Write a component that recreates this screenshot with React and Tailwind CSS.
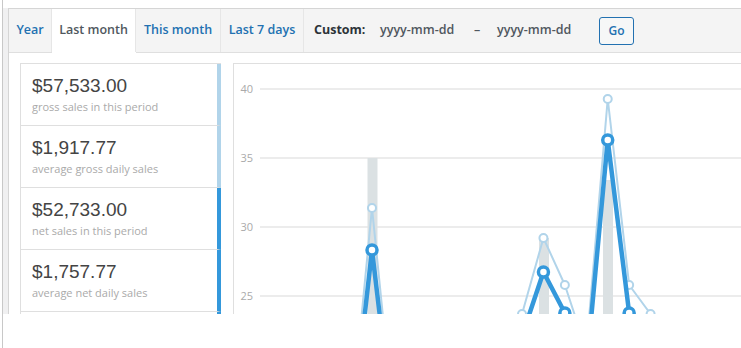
import React from "react";

const X0 = 372;
const STEP = 21.43;
const light = [
  [-1, 430], [0, 208], [1, 420], [2, 430], [3, 440], [4, 430], [5, 420], [6, 380],
  [7, 314], [8, 238], [9, 285], [10, 350], [11, 99], [12, 285], [13, 314], [14, 360], [15, 380], [16, 400], [17, 420],
];
const dark = [
  [-1, 440], [0, 250], [1, 430], [2, 440], [3, 450], [4, 440], [5, 430], [6, 400],
  [7, 336], [8, 272], [9, 313], [10, 370], [11, 140], [12, 313], [13, 345], [14, 380], [15, 400], [16, 420], [17, 440],
];
const px = (k) => X0 + STEP * k;
const pts = (arr) => arr.map(([k, y]) => `${px(k)},${y}`).join(" ");

function Chart() {
  return (
    <svg width="507" height="260" className="block">
      <g transform="translate(-234,-64)">
        {[
          [89, "40"],
          [158, "35"],
          [227, "30"],
          [296, "25"],
        ].map(([y, t]) => (
          <g key={t}>
            <line x1="260" x2="760" y1={y} y2={y} stroke="#e6e6e6" strokeWidth="1.5" />
            <text x="253" y={y + 4} textAnchor="end" fontSize="11" fill="#aaaaaa" fontFamily="'Open Sans', sans-serif">
              {t}
            </text>
          </g>
        ))}
        <rect x="367.5" y="158" width="10" height="200" fill="#dbe1e3" />
        <rect x="539" y="238" width="10" height="120" fill="#dbe1e3" />
        <rect x="603" y="180" width="10" height="180" fill="#dbe1e3" />
        <polyline points={pts(light)} fill="none" stroke="#b1d4ea" strokeWidth="2" strokeLinejoin="round" />
        {light.map(([k, y]) => (
          <circle key={"l" + k} cx={px(k)} cy={y} r="4" fill="#fff" stroke="#b1d4ea" strokeWidth="2" />
        ))}
        <polyline points={pts(dark)} fill="none" stroke="#3498db" strokeWidth="4.5" strokeLinejoin="round" />
        {dark.map(([k, y]) => (
          <circle key={"d" + k} cx={px(k)} cy={y} r="5" fill="#fff" stroke="#3498db" strokeWidth="3.5" />
        ))}
      </g>
    </svg>
  );
}

const items = [
  ["$57,533.00", "gross sales in this period", "border-r-[#b1d4ea]"],
  ["$1,917.77", "average gross daily sales", "border-r-[#b1d4ea]"],
  ["$52,733.00", "net sales in this period", "border-r-[#3498db]"],
  ["$1,757.77", "average net daily sales", "border-r-[#3498db]"],
];

export default function App() {
  return (
    <div className="w-[741px] h-[348px] bg-white overflow-hidden pl-[2px] font-['Open_Sans',sans-serif]">
      <div className="h-full border-l border-[#c8c8c8] flex flex-col">
        <div className="h-[8px] shrink-0 bg-white" />
        <div className="h-[306px] shrink-0 bg-[#f0f0f1] pl-[5px] overflow-hidden">
          <div className="h-full bg-white border-t border-l border-[#d5d5d5] flex flex-col">
            <div className="h-[44px] shrink-0 bg-[#f4f4f4] border-b border-[#dfdfdf] flex items-stretch text-[12.5px] font-semibold">
              <div className="w-[43px] flex items-center justify-center text-[#2271b1] border-r border-[#e6e6e6]">Year</div>
              <div className="w-[84px] flex items-center justify-center text-[#50575e] bg-white shadow-[0_1px_0_0_#fff] border-r border-[#e6e6e6]">
                Last month
              </div>
              <div className="w-[85px] flex items-center justify-center text-[#2271b1] border-r border-[#e6e6e6]">This month</div>
              <div className="w-[83px] flex items-center justify-center text-[#2271b1] border-r border-[#e6e6e6]">Last 7 days</div>
              <div className="flex items-center pl-[10px]">
                <span className="w-[66px] text-[#2c3338] font-bold">Custom:</span>
                <span className="w-[94px] text-[#50575e]">yyyy-mm-dd</span>
                <span className="w-[23px] text-[#50575e]">–</span>
                <span className="w-[102px] text-[#50575e]">yyyy-mm-dd</span>
                <button className="w-[35px] h-[28px] border border-[#2271b1] rounded-[3px] bg-[#f6f7f7] text-[#2271b1] text-[12px] font-semibold flex items-center justify-center">
                  Go
                </button>
              </div>
            </div>
            <div className="flex-1 flex pl-[11px] pt-[10px] gap-[12px] min-h-0">
              <ul className="w-[201px] shrink-0 border-l border-t border-[#dfdfdf]">
                {items.map(([n, l, c]) => (
                  <li key={l} className={"h-[62px] border-b border-[#dfdfdf] border-r-4 pl-[11px] pt-[9px] " + c}>
                    <div className="text-[19px] leading-[26px] text-[#444] font-['Liberation_Sans',Arial,sans-serif]">{n}</div>
                    <div className="text-[11px] leading-[16px] text-[#aaa]">{l}</div>
                  </li>
                ))}
                <li className="h-[62px] border-r-4 border-r-[#3498db]" />
              </ul>
              <div className="flex-1 border-l border-t border-[#dfdfdf] bg-white overflow-hidden">
                <Chart />
              </div>
            </div>
          </div>
        </div>
      </div>
    </div>
  );
}
